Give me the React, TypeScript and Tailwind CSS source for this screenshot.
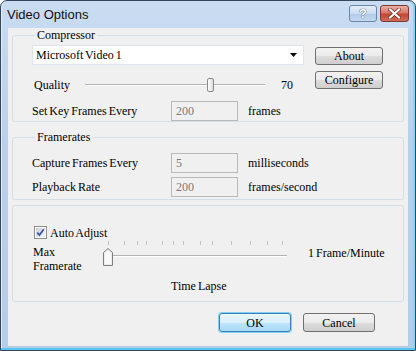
import React from "react";

const btn =
  "h-[18px] w-[68px] flex items-center justify-center rounded-[3px] border border-[#707070] bg-[linear-gradient(to_bottom,#f2f2f2_0%,#ebebeb_50%,#dddddd_51%,#cfcfcf_100%)] text-[12px] text-black leading-none";

const Field = ({ value }: { value: string }) => (
  <div className="w-[67px] h-[20px] border border-[#b9b9b9] bg-[#f0f0f0] pl-[4px] text-[12px] leading-[18px] text-[#7a7a7a]">
    {value}
  </div>
);

const Row = ({ label, value, unit, className }: { label: string; value: string; unit: string; className?: string }) => (
  <div className={"flex items-center h-[20px] " + (className ?? "")}>
    <span className="w-[139px]">{label}</span>
    <Field value={value} />
    <span className="ml-[10px]">{unit}</span>
  </div>
);

// tick positions of the framerate slider, relative to its left edge (x=100)
const ticks = [8, 24, 37, 46, 62, 73, 83, 100, 112, 131, 150, 167, 182];

export default function App() {
  return (
    <div className="w-[416px] h-[351px] overflow-hidden bg-white">
      <div className="w-full h-full flex flex-col border border-[#33465c] rounded-t-[7px] bg-[linear-gradient(to_bottom,#c9dcf2_0%,#b9d0ec_40%,#b4cdea_100%)] px-[7px] pb-[4px] shadow-[inset_0_-2px_0_#5cc5ef,inset_-2px_0_0_#8fd3f0,inset_1px_0_0_#e2edf9]">
        {/* Title bar */}
        <div className="h-[27px] flex items-start justify-between shrink-0">
          <span className="mt-[6px] -ml-[1px] text-[13px] leading-[15px] text-[#111] font-['Liberation_Sans',Arial,sans-serif]">
            Video Options
          </span>
          <div className="flex gap-[3px] mt-[4px] -mr-[1px]">
            <div className="w-[28px] h-[17px] rounded-[3px] border border-[#6c86a6] bg-[linear-gradient(to_bottom,#e4eef9_0%,#cadcf1_50%,#b2cae8_51%,#c3d8f1_100%)] flex items-center justify-center">
              <span
                className="text-[13px] font-bold leading-none text-white font-['Liberation_Sans',Arial,sans-serif]"
                style={{ textShadow: "0 0 1px #3b5676, 0 0 1px #3b5676" }}
              >
                ?
              </span>
            </div>
            <div className="w-[29px] h-[17px] rounded-[3px] border border-[#7c3b32] bg-[linear-gradient(to_bottom,#eab0a3_0%,#d9796a_45%,#c64533_55%,#d26a58_100%)] flex items-center justify-center">
              <svg width="13" height="11" viewBox="0 0 13 11">
                <path d="M2 1.5 L11 9.5 M11 1.5 L2 9.5" stroke="#6b2a22" strokeWidth="3.6" strokeLinecap="square" />
                <path d="M2 1.5 L11 9.5 M11 1.5 L2 9.5" stroke="#ffffff" strokeWidth="2.2" strokeLinecap="square" />
              </svg>
            </div>
          </div>
        </div>

        {/* Client area */}
        <div className="flex-1 bg-[#f0f0f0] px-[4px] text-[12px] text-black [word-spacing:-1px] font-['Liberation_Serif','Times_New_Roman',serif]">
          {/* Compressor */}
          <fieldset className="border border-[#d6dde3] rounded-[3px] pl-[19px] pt-[3px]">
            <legend className="ml-[3px] px-[2px] leading-[14px]">Compressor</legend>
            <div className="flex">
              <div className="w-[272px]">
                <div className="h-[20px] bg-white border border-[#dfe4ea] flex items-center justify-between pl-[3px] pr-[6px]">
                  <span>Microsoft Video 1</span>
                  <svg width="7" height="4" viewBox="0 0 7 4">
                    <path d="M0 0 H7 L3.5 4 Z" fill="#000" />
                  </svg>
                </div>
                <div className="mt-[12px] h-[16px] flex items-center">
                  <span className="ml-[2px] w-[51px]">Quality</span>
                  <div className="relative w-[180px] h-[16px]">
                    <div className="absolute left-0 right-0 top-[7px] h-[1px] bg-[#b5b5b5]" />
                    <div className="absolute left-0 right-0 top-[8px] h-[1px] bg-[#ffffff]" />
                    <div className="absolute left-[122px] top-[1px] w-[7px] h-[14px] rounded-[2px] border border-[#8a8a8a] bg-[linear-gradient(to_right,#ffffff,#dcdcdc)]" />
                  </div>
                  <span className="ml-[16px]">70</span>
                </div>
                <Row label="Set Key Frames Every" value="200" unit="frames" className="mt-[8px]" />
              </div>
              <div className="ml-[11px] mt-[2px] flex flex-col gap-[6px]">
                <div className={btn}>About</div>
                <div className={btn}>Configure</div>
              </div>
            </div>
          </fieldset>

          {/* Framerates */}
          <fieldset className="mt-[8px] border border-[#d6dde3] rounded-[3px] pl-[19px] pt-[9px] pb-[2px]">
            <legend className="ml-[3px] px-[2px] leading-[14px]">Framerates</legend>
            <Row label="Capture Frames Every" value="5" unit="milliseconds" />
            <Row label="Playback Rate" value="200" unit="frames/second" className="mt-[4px]" />
          </fieldset>

          {/* Time lapse */}
          <fieldset className="mt-[5px] border border-[#d6dde3] rounded-[3px] pt-[20px] pb-[8px]">
            <div className="flex items-center h-[13px] pl-[21px]">
              <svg width="13" height="13" viewBox="0 0 13 13">
                <defs>
                  <linearGradient id="cb" x1="0" y1="0" x2="1" y2="1">
                    <stop offset="0" stopColor="#cbcfd5" />
                    <stop offset="1" stopColor="#f6f6f6" />
                  </linearGradient>
                </defs>
                <rect x="0.5" y="0.5" width="12" height="12" fill="#fff" stroke="#8e8f8f" />
                <rect x="2" y="2" width="9" height="9" fill="url(#cb)" />
                <path d="M3.2 6.6 L5.4 9 L9.8 3.2" fill="none" stroke="#3f59a8" strokeWidth="1.8" />
              </svg>
              <span className="ml-[3px]">Auto Adjust</span>
            </div>
            <div className="flex items-start">
              <div className="ml-[20px] w-[67px] pt-[6px] leading-[14px]">
                Max
                <br />
                Framerate
              </div>
              <svg width="194" height="32" viewBox="0 0 194 32">
                {ticks.map((t) => (
                  <rect key={t} x={t} y="2" width="1" height="4" fill="#c4c4c4" />
                ))}
                <rect x="3" y="16" width="184" height="1" fill="#b3b3b3" />
                <rect x="3" y="17" width="184" height="1" fill="#ffffff" />
                <path
                  d="M3.5 13.5 L8 9.5 L12.5 13.5 V26.5 H3.5 Z"
                  fill="#ececec"
                  stroke="#7e7e7e"
                  strokeLinejoin="round"
                />
                <path d="M5 14 L8 11.3 L11 14 V25 H5 Z" fill="#f9f9f9" />
              </svg>
              <span className="ml-[14px] pt-[7px] leading-[14px]">1 Frame/Minute</span>
            </div>
            <div className="mt-[6px] pl-[158px] leading-[14px]">Time Lapse</div>
          </fieldset>

          {/* Dialog buttons */}
          <div className="mt-[11px] flex justify-end gap-[12px] pr-[29px]">
            <div className="h-[19px] w-[72px] flex items-center justify-center rounded-[3px] border border-[#3c7fb1] shadow-[0_0_0_1px_#7fd0f4] bg-[linear-gradient(to_bottom,#eaf6fd_0%,#d9f0fc_50%,#bee6fd_51%,#a7d9f5_100%)]">
              OK
            </div>
            <div className="h-[19px] w-[72px] flex items-center justify-center rounded-[3px] border border-[#707070] bg-[linear-gradient(to_bottom,#f2f2f2_0%,#ebebeb_50%,#dddddd_51%,#cfcfcf_100%)]">
              Cancel
            </div>
          </div>
        </div>
      </div>
    </div>
  );
}
